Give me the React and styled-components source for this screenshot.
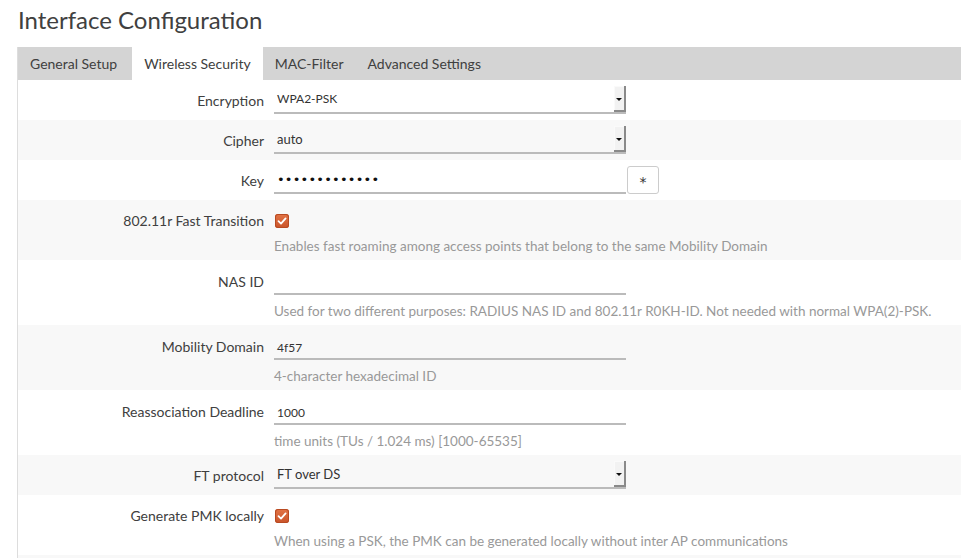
import React from 'react';
import styled, { createGlobalStyle } from 'styled-components';

const Global = createGlobalStyle`
	body {
		margin: 0;
		background: #fff;
		font-family: Lato, 'Open Sans', sans-serif;
		color: #404040;
	}
`;

const Page = styled.div`
	padding-left: 17px;
	overflow: hidden;
`;

const Title = styled.h2`
	margin: 0;
	padding: 4px 0 0 1px;
	height: 47px;
	box-sizing: border-box;
	font-size: 24px;
	line-height: 32px;
	font-weight: 400;
	color: #404040;
`;

const Section = styled.div`
	border-left: 1px solid #ddd;
`;

const TabBar = styled.ul`
	display: flex;
	margin: 0;
	padding: 0;
	list-style: none;
	background: #d4d4d4;
	height: 33px;
`;

const Tab = styled.li`
	padding: 0 12px;
	line-height: 34px;
	font-size: 14px;
	color: #404040;
	background: ${p => (p.active ? '#fff' : 'transparent')};
	margin-left: ${p => (p.active ? '3px' : '0')};
`;

const Row = styled.div`
	display: grid;
	grid-template-columns: 246px 1fr;
	align-items: start;
	column-gap: 10px;
	padding: ${p => (p.input ? '7px 0 5px' : p.desc ? '6px 0 5px' : '6px 0')};
	background: ${p => (p.alt ? '#f8f8f8' : '#fff')};
`;

const Label = styled.label`
	text-align: right;
	font-size: 14px;
	line-height: 28px;
	height: 28px;
	padding-top: 1px;
	box-sizing: border-box;
	color: #404040;
`;

const Field = styled.div`
	display: flex;
	flex-direction: column;
`;

const Line = styled.div`
	display: flex;
	align-items: flex-start;
	height: 28px;
`;

const Box = styled.div`
	position: relative;
	width: 352px;
	height: 28px;
	box-sizing: border-box;
	border-bottom: 2px solid #bbb;
	padding: ${p => (p.value ? '3px 3px 0' : '0 3px')};
	font-size: ${p => p.size || 13}px;
	line-height: 26px;
	color: #333;
`;

const Arrow = styled.span`
	position: absolute;
	right: 0;
	top: 0;
	bottom: 0;
	width: 12px;
	background: #f2f2f2;
	box-shadow: inset -2px -2px 0 #8a8a8a, inset 1px 1px 0 #fafafa;
	display: flex;
	align-items: center;
	justify-content: center;
	&::after {
		content: '';
		border-left: 3px solid transparent;
		border-right: 3px solid transparent;
		border-top: 3px solid #111;
		margin-right: 2px;
	}
`;

const Dots = styled.span`
	font-family: 'DejaVu Sans', sans-serif;
	font-size: 13px;
	letter-spacing: 0.2px;
	color: #111;
	line-height: 26px;
`;

const StarButton = styled.button`
	width: 32px;
	height: 28px;
	margin-left: 1px;
	background: #fff;
	border: 1px solid #ccc;
	border-radius: 3px;
	font-family: 'DejaVu Sans', sans-serif;
	font-size: 14px;
	color: #333;
	padding: 4px 0 0;
`;

const Check = styled.span`
	display: inline-flex;
	align-items: center;
	justify-content: center;
	width: 14px;
	height: 14px;
	margin: 8px 0 0 1px;
	border-radius: 3px;
	background: linear-gradient(#e27446, #c9542a);
	box-shadow: inset 0 0 0 1px #b84a22;
`;

const Desc = styled.div`
	font-size: 13.5px;
	line-height: 18px;
	color: #999;
	margin-top: ${p => (p.gap ? '7px' : '3px')};
`;

function Select({ value, size }) {
	return (
		<Box size={size}>
			{value}
			<Arrow />
		</Box>
	);
}

function Checkbox() {
	return (
		<Check>
			<svg width="10" height="10" viewBox="0 0 10 10">
				<path d="M1.5 5.2 L4 7.6 L8.6 2.4" fill="none" stroke="#fff" strokeWidth="1.8" strokeLinecap="round" strokeLinejoin="round" />
			</svg>
		</Check>
	);
}

export default function App() {
	return (
		<Page>
			<Global />
			<Title>Interface Configuration</Title>
			<Section>
				<TabBar>
					<Tab>General Setup</Tab>
					<Tab active>Wireless Security</Tab>
					<Tab>MAC-Filter</Tab>
					<Tab>Advanced Settings</Tab>
				</TabBar>

				<Row>
					<Label>Encryption</Label>
					<Field>
						<Line><Select value="WPA2-PSK" size={12} /></Line>
					</Field>
				</Row>
				<Row alt>
					<Label>Cipher</Label>
					<Field>
						<Line><Select value="auto" /></Line>
					</Field>
				</Row>
				<Row>
					<Label>Key</Label>
					<Field>
						<Line>
							<Box><Dots>•••••••••••••</Dots></Box>
							<StarButton>*</StarButton>
						</Line>
					</Field>
				</Row>
				<Row alt desc>
					<Label>802.11r Fast Transition</Label>
					<Field>
						<Line><Checkbox /></Line>
						<Desc>Enables fast roaming among access points that belong to the same Mobility Domain</Desc>
					</Field>
				</Row>
				<Row input>
					<Label>NAS ID</Label>
					<Field>
						<Line><Box /></Line>
						<Desc gap>Used for two different purposes: RADIUS NAS ID and 802.11r R0KH-ID. Not needed with normal WPA(2)-PSK.</Desc>
					</Field>
				</Row>
				<Row alt input>
					<Label>Mobility Domain</Label>
					<Field>
						<Line><Box size={12} value>4f57</Box></Line>
						<Desc gap>4-character hexadecimal ID</Desc>
					</Field>
				</Row>
				<Row input>
					<Label>Reassociation Deadline</Label>
					<Field>
						<Line><Box size={12} value>1000</Box></Line>
						<Desc gap>time units (TUs / 1.024 ms) [1000-65535]</Desc>
					</Field>
				</Row>
				<Row alt>
					<Label>FT protocol</Label>
					<Field>
						<Line><Select value="FT over DS" /></Line>
					</Field>
				</Row>
				<Row desc>
					<Label>Generate PMK locally</Label>
					<Field>
						<Line><Checkbox /></Line>
						<Desc>When using a PSK, the PMK can be generated locally without inter AP communications</Desc>
					</Field>
				</Row>
				<Row alt>
					<Label />
					<Field />
				</Row>
			</Section>
		</Page>
	);
}
